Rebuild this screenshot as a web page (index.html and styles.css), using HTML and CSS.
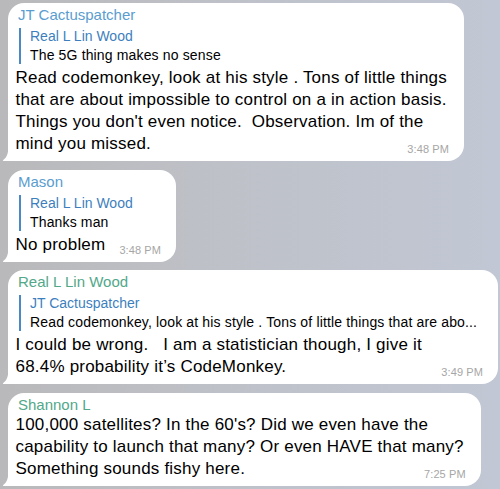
FILE: index.html
```html
<!DOCTYPE html>
<html>
<head>
<meta charset="utf-8">
<link rel="stylesheet" href="styles.css">
</head>
<body>
<div class="chat">
  <div class="bubble">
    <svg class="tail" width="12" height="16" viewBox="0 0 12 16"><path d="M6.5 0 C6.5 7 5.5 12 1.2 15.1 C0.6 15.5 0.8 16 1.6 16 L12 16 L12 0 Z" fill="#fff"/></svg>
    <div class="name blue">JT Cactuspatcher</div>
    <div class="reply">
      <div class="reply-name">Real L Lin Wood</div>
      <div class="reply-text">The 5G thing makes no sense</div>
    </div>
    <p class="text">Read codemonkey, look at his style . Tons of little things<br>that are about impossible to control on a in action basis.<br>Things you don't even notice.&nbsp; Observation. Im of the<br>mind you missed.<span class="time">3:48 PM</span></p>
  </div>

  <div class="bubble">
    <svg class="tail" width="12" height="16" viewBox="0 0 12 16"><path d="M6.5 0 C6.5 7 5.5 12 1.2 15.1 C0.6 15.5 0.8 16 1.6 16 L12 16 L12 0 Z" fill="#fff"/></svg>
    <div class="name blue">Mason</div>
    <div class="reply">
      <div class="reply-name">Real L Lin Wood</div>
      <div class="reply-text">Thanks man</div>
    </div>
    <p class="text">No problem<span class="time">3:48 PM</span></p>
  </div>

  <div class="bubble wide">
    <svg class="tail" width="12" height="16" viewBox="0 0 12 16"><path d="M6.5 0 C6.5 7 5.5 12 1.2 15.1 C0.6 15.5 0.8 16 1.6 16 L12 16 L12 0 Z" fill="#fff"/></svg>
    <div class="name green">Real L Lin Wood</div>
    <div class="reply">
      <div class="reply-name">JT Cactuspatcher</div>
      <div class="reply-text">Read codemonkey, look at his style . Tons of little things that are abo...</div>
    </div>
    <p class="text">I could be wrong.&nbsp;&nbsp; I am a statistician though, I give it<br>68.4% probability it’s CodeMonkey.<span class="time">3:49 PM</span></p>
  </div>

  <div class="bubble">
    <svg class="tail" width="12" height="16" viewBox="0 0 12 16"><path d="M6.5 0 C6.5 7 5.5 12 1.2 15.1 C0.6 15.5 0.8 16 1.6 16 L12 16 L12 0 Z" fill="#fff"/></svg>
    <div class="name green">Shannon L</div>
    <p class="text plain">100,000 satellites? In the 60's? Did we even have the<br>capability to launch that many? Or even HAVE that many?<br>Something sounds fishy here.<span class="time">7:25 PM</span></p>
  </div>
</div>
</body>
</html>
```

FILE: styles.css
```css
html, body {
  margin: 0;
  padding: 0;
}

body {
  width: 500px;
  height: 489px;
  overflow: hidden;
  background: linear-gradient(90deg, #b9b9bb 0%, #bec1c8 45%, #c1c7d4 100%);
  font-family: "Liberation Sans", Arial, sans-serif;
  color: #000;
}

.chat {
  display: flex;
  flex-direction: column;
  align-items: flex-start;
  gap: 8.5px;
  padding: 3px 0 0 8px;
}

.bubble {
  position: relative;
  background: #fff;
  border-radius: 16px 16px 16px 0;
  padding: 3px 17px 6px 7.5px;
  max-width: 490px;
  box-sizing: border-box;
}

.bubble.wide {
  width: 490px;
}

.tail {
  position: absolute;
  left: -6.5px;
  bottom: 0;
  display: block;
}

.name {
  font-size: 15px;
  line-height: 18px;
  margin-left: 2.5px;
}

.blue {
  color: #5a9dd0;
}

.green {
  color: #52a88a;
}

.reply {
  margin: 4px 0 0 3.5px;
  border-left: 2px solid #4a89c3;
  padding-left: 9px;
}

.reply-name {
  font-size: 14px;
  line-height: 17px;
  color: #3d7fbe;
}

.reply-text {
  font-size: 14px;
  line-height: 17px;
  margin-top: 2px;
  white-space: nowrap;
  letter-spacing: 0.15px;
}

.text {
  margin: 3px 0 0 0;
  font-size: 17px;
  line-height: 22px;
  letter-spacing: 0.2px;
}

.text.plain {
  margin-top: 0;
}

.time {
  float: right;
  font-size: 11px;
  line-height: 12px;
  margin: 10px -2px 0 14px;
  color: #a6a6a6;
  letter-spacing: 0.1px;
}
```
